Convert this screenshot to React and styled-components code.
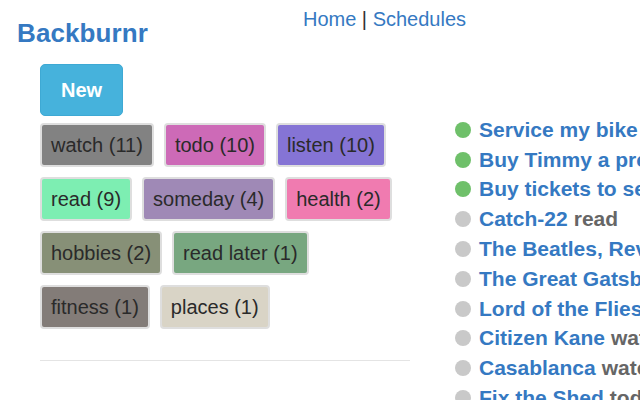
import React from 'react';
import styled, { createGlobalStyle } from 'styled-components';

const GlobalStyle = createGlobalStyle`
  html, body {
    margin: 0;
    padding: 0;
    overflow: hidden;
    background: #fff;
    font-family: "Liberation Sans", Arial, sans-serif;
    color: #333;
  }
`;

/* 전체 페이지 */
const Page = styled.div`
  padding: 8px 0 0 17px;
  width: 640px;
  box-sizing: border-box;
`;

const Header = styled.div`
  display: flex;
  align-items: flex-start;
`;

const Brand = styled.h1`
  margin: 10px 0 0 0;
  font-size: 26px;
  line-height: 30px;
  font-weight: bold;
  color: #3579c2;
  letter-spacing: 0.1px;
`;

const Nav = styled.div`
  margin-left: 155px;
  font-size: 20px;
  line-height: 22px;
  color: #333;
  white-space: nowrap;

  a {
    color: #3579c2;
    text-decoration: none;
  }
`;

const Main = styled.div`
  display: flex;
  margin: 16px 0 0 23px;
`;

/* 왼쪽: 버튼, 태그 */
const LeftColumn = styled.div`
  width: 370px;
  flex-shrink: 0;
  display: flex;
  flex-direction: column;
`;

const NewButton = styled.button`
  align-self: flex-start;
  padding: 13px 20px;
  border: 1px solid #3ea9d4;
  border-radius: 5px;
  background: #46b2dc;
  color: #fff;
  font-family: inherit;
  font-size: 20px;
  line-height: 24px;
  font-weight: bold;
  cursor: pointer;
`;

const TagList = styled.div`
  margin-top: 7px;
  display: flex;
  flex-wrap: wrap;
  gap: 10px;
`;

const Tag = styled.span`
  padding: 10px 9px;
  border: 2px solid #dedede;
  border-radius: 4px;
  background: ${(p) => p.$bg};
  font-size: 20px;
  line-height: 20px;
  color: #2a2a2a;
  white-space: nowrap;
`;

const Divider = styled.hr`
  margin: 31px 0 0 0;
  border: none;
  height: 1px;
  background: #e4e4e4;
`;

/* 오른쪽: 할 일 목록 */
const TaskList = styled.ul`
  list-style: none;
  margin: 0 0 0 45px;
  padding: 51px 0 0 0;
`;

const TaskItem = styled.li`
  display: flex;
  align-items: center;
  height: 29.8px;
  white-space: nowrap;
  font-size: 21px;
  font-weight: bold;
`;

const Dot = styled.span`
  width: 16px;
  height: 16px;
  border-radius: 50%;
  flex-shrink: 0;
  margin-right: 8px;
  background: ${(p) => (p.$done ? '#6fc06a' : '#c9c9c9')};
`;

const TaskTitle = styled.a`
  color: #3579c2;
  text-decoration: none;
`;

const TaskCategory = styled.span`
  color: #666;
  margin-left: 6px;
`;

const tags = [
  { name: 'watch', count: 11, color: '#828282' },
  { name: 'todo', count: 10, color: '#cd6ab7' },
  { name: 'listen', count: 10, color: '#8574d5' },
  { name: 'read', count: 9, color: '#7deeb2' },
  { name: 'someday', count: 4, color: '#9f89b6' },
  { name: 'health', count: 2, color: '#f07bb0' },
  { name: 'hobbies', count: 2, color: '#879077' },
  { name: 'read later', count: 1, color: '#78a780' },
  { name: 'fitness', count: 1, color: '#837c78' },
  { name: 'places', count: 1, color: '#d9d4c6' },
];

const tasks = [
  { title: 'Service my bike', category: 'todo', done: true },
  { title: 'Buy Timmy a present', category: 'todo', done: true },
  { title: 'Buy tickets to see Hamilton', category: 'todo', done: true },
  { title: 'Catch-22', category: 'read' },
  { title: 'The Beatles, Revolver', category: 'listen' },
  { title: 'The Great Gatsby', category: 'read' },
  { title: 'Lord of the Flies', category: 'read' },
  { title: 'Citizen Kane', category: 'watch' },
  { title: 'Casablanca', category: 'watch' },
  { title: 'Fix the Shed', category: 'todo' },
];

function App() {
  return (
    <Page>
      <GlobalStyle />
      <Header>
        <Brand>Backburnr</Brand>
        <Nav>
          <a href="#">Home</a> | <a href="#">Schedules</a>
        </Nav>
      </Header>
      <Main>
        <LeftColumn>
          <NewButton>New</NewButton>
          <TagList>
            {tags.map((t) => (
              <Tag key={t.name} $bg={t.color}>
                {t.name} ({t.count})
              </Tag>
            ))}
          </TagList>
          <Divider />
        </LeftColumn>
        <TaskList>
          {tasks.map((t) => (
            <TaskItem key={t.title}>
              <Dot $done={t.done} />
              <TaskTitle href="#">{t.title}</TaskTitle>
              <TaskCategory>{t.category}</TaskCategory>
            </TaskItem>
          ))}
        </TaskList>
      </Main>
    </Page>
  );
}

export default App;
